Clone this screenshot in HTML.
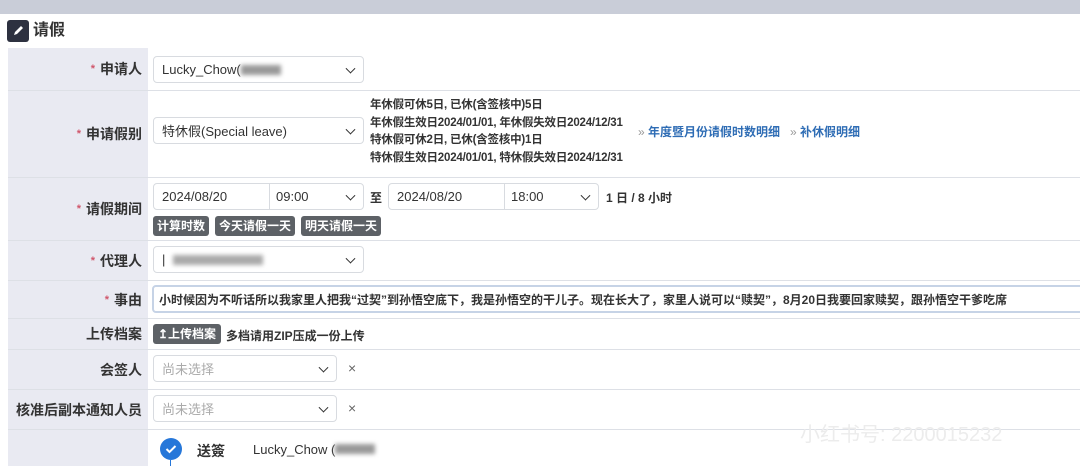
<!DOCTYPE html>
<html><head><meta charset="utf-8"><style>
*{box-sizing:border-box;margin:0;padding:0}
body{width:1080px;height:466px;overflow:hidden;background:#fff;font-family:"Liberation Sans","Noto Sans CJK SC",sans-serif;color:#222;position:relative}
.a{position:absolute}
.top{left:0;top:0;width:1080px;height:14px;background:#c9cdd8}
.panel{left:0;top:14px;width:1080px;height:452px;background:#fff;border-radius:6px 0 0 0}
.lab{left:8px;width:140px;background:#e9eaf2;text-align:right;padding-right:6px;font-size:14px;font-weight:bold;color:#333;display:flex;align-items:center;justify-content:flex-end}
.lab i{color:#d0566b;font-style:normal;margin-right:5px;font-size:11px}
.line{left:8px;width:1072px;height:1px;background:#dde0e6}
.sel{background:#fff;border:1px solid #d8dbe0;border-radius:4px;font-size:13px;padding-left:8px;display:flex;align-items:center;color:#333}
.chev{position:absolute;right:9px;top:50%;width:7px;height:7px;border-right:1.6px solid #333;border-bottom:1.6px solid #333;transform:translateY(-70%) rotate(45deg)}
.btn{background:#5d6166;color:#fff;font-size:12px;font-weight:bold;border-radius:3px;height:20px;line-height:20px;padding:0 4px}
.t{font-size:12px;color:#333;font-weight:bold}
.ph{color:#aaa;font-weight:normal}
.x{font-size:14px;color:#666}
</style></head><body>
<div class="a top"></div>
<div class="a panel"></div>
<div class="a" style="left:7px;top:20px;width:22px;height:22px;background:#2d3140;border-radius:3px"><svg width="22" height="22"><path d="M7 15l1-3 6-6 2 2-6 6z" fill="#fff"/></svg></div>
<div class="a" style="left:33px;top:20px;font-size:16px;font-weight:bold;color:#333;line-height:22px">请假</div>

<div class="a lab" style="top:48px;height:42px"><i>*</i>申请人</div>
<div class="a lab" style="top:91px;height:86px"><i>*</i>申请假别</div>
<div class="a lab" style="top:178px;height:62px"><i>*</i>请假期间</div>
<div class="a lab" style="top:241px;height:39px"><i>*</i>代理人</div>
<div class="a lab" style="top:281px;height:37px"><i>*</i>事由</div>
<div class="a lab" style="top:319px;height:30px">上传档案</div>
<div class="a lab" style="top:350px;height:39px">会签人</div>
<div class="a lab" style="top:390px;height:39px">核准后副本通知人员</div>
<div class="a lab" style="top:430px;height:36px"></div>
<div class="a line" style="top:90px"></div>
<div class="a line" style="top:177px"></div>
<div class="a line" style="top:240px"></div>
<div class="a line" style="top:280px"></div>
<div class="a line" style="top:318px"></div>
<div class="a line" style="top:349px"></div>
<div class="a line" style="top:389px"></div>
<div class="a line" style="top:429px"></div>

<div class="a sel" style="left:153px;top:56px;width:211px;height:27px">Lucky_Chow( <span style="display:inline-block;width:40px;height:10px;background:#999;filter:blur(2px)"></span><span class="chev"></span></div>
<div class="a sel" style="left:153px;top:117px;width:211px;height:27px">特休假(Special leave)<span class="chev"></span></div>
<div class="a t" style="left:370px;top:97px;line-height:17.5px;font-size:11.5px;letter-spacing:-0.2px">年休假可休5日, 已休(含签核中)5日<br>年休假生效日2024/01/01, 年休假失效日2024/12/31<br>特休假可休2日, 已休(含签核中)1日<br>特休假生效日2024/01/01, 特休假失效日2024/12/31</div>
<div class="a t" style="left:638px;top:123px;color:#2f6db5"><span style="color:#999;font-weight:normal">»</span> 年度暨月份请假时数明细 &nbsp;&nbsp;<span style="color:#999;font-weight:normal">»</span> 补休假明细</div>

<div class="a sel" style="left:153px;top:183px;width:211px;height:27px">2024/08/20<span style="position:absolute;left:115px;top:0;bottom:0;border-left:1px solid #d8dbe0"></span><span style="position:absolute;left:122px">09:00</span><span class="chev"></span></div>
<div class="a t" style="left:370px;top:189px">至</div>
<div class="a sel" style="left:388px;top:183px;width:211px;height:27px">2024/08/20<span style="position:absolute;left:115px;top:0;bottom:0;border-left:1px solid #d8dbe0"></span><span style="position:absolute;left:122px">18:00</span><span class="chev"></span></div>
<div class="a t" style="left:606px;top:189px">1 日 / 8 小时</div>
<div class="a btn" style="left:153px;top:216px">计算时数</div>
<div class="a btn" style="left:215px;top:216px">今天请假一天</div>
<div class="a btn" style="left:301px;top:216px">明天请假一天</div>

<div class="a sel" style="left:153px;top:246px;width:211px;height:27px">|<span style="display:inline-block;margin-left:8px;width:90px;height:10px;background:#aaa;filter:blur(2px)"></span><span class="chev"></span></div>
<div class="a sel" style="left:152px;top:285px;width:940px;height:28px;border:2px solid #c6d3e6;font-size:12px;font-weight:bold;color:#333;white-space:nowrap;padding-left:5px">小时候因为不听话所以我家里人把我“过契”到孙悟空底下，我是孙悟空的干儿子。现在长大了，家里人说可以“赎契”，8月20日我要回家赎契，跟孙悟空干爹吃席</div>

<div class="a btn" style="left:153px;top:324px;height:20px;line-height:20px;padding:0 5px">↥上传档案</div>
<div class="a t" style="left:226px;top:327px">多档请用ZIP压成一份上传</div>

<div class="a sel" style="left:153px;top:355px;width:184px;height:27px"><span class="ph">尚未选择</span><span class="chev"></span></div>
<div class="a x" style="left:348px;top:360px">×</div>
<div class="a sel" style="left:153px;top:395px;width:184px;height:27px"><span class="ph">尚未选择</span><span class="chev"></span></div>
<div class="a x" style="left:348px;top:400px">×</div>

<div class="a" style="left:160px;top:438px;width:22px;height:22px;border-radius:50%;background:#2677d9"><svg width="22" height="22"><path d="M6.5 11l3 3 6-6" stroke="#fff" stroke-width="2" fill="none"/></svg></div>
<div class="a" style="left:170px;top:460px;width:1px;height:6px;background:#2677d9"></div>
<div class="a t" style="left:197px;top:441px;font-size:14px">送簽</div>
<div class="a" style="left:253px;top:442px;font-size:13px;color:#333">Lucky_Chow (<span style="display:inline-block;width:40px;height:10px;background:#999;filter:blur(2px)"></span></div>
<div class="a" style="left:800px;top:418px;font-size:20px;color:#ececec">小红书号: 2200015232</div>
</body></html>
